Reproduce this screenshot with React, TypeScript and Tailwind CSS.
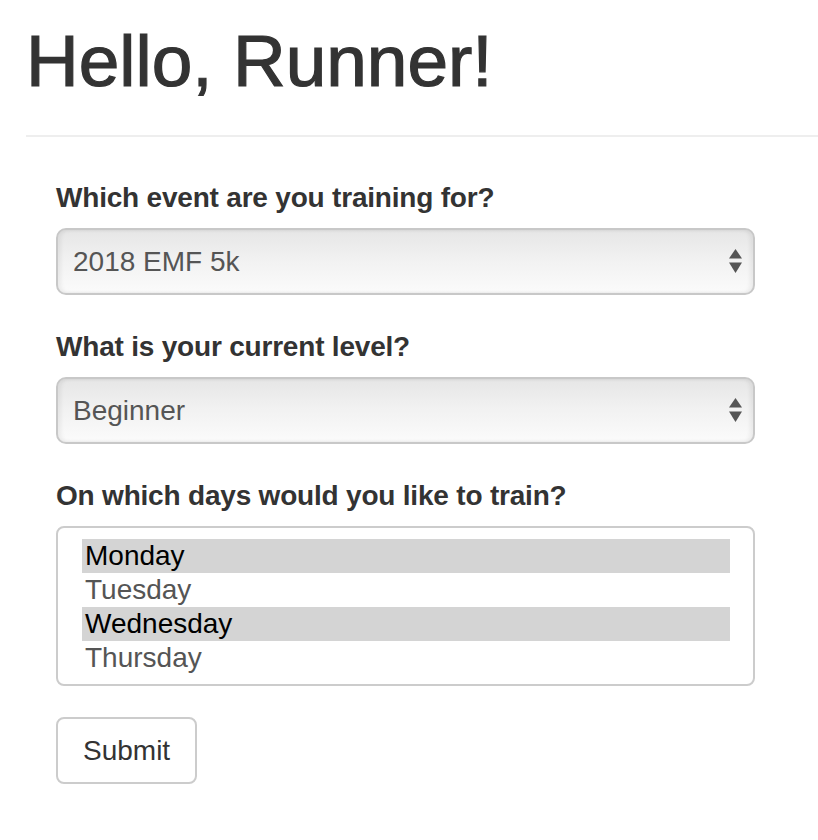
const events = ['2018 EMF 5k']
const levels = ['Beginner']
const days = [
  { name: 'Monday', selected: true },
  { name: 'Tuesday', selected: false },
  { name: 'Wednesday', selected: true },
  { name: 'Thursday', selected: false },
]

function SelectArrows() {
  return (
    <svg width="13" height="25" viewBox="0 0 13 25" className="shrink-0">
      <path d="M6.5 0L13 9.5H0Z" fill="#555" />
      <path d="M0 13.5H13L6.5 24Z" fill="#555" />
    </svg>
  )
}

function FakeSelect({ value }: { value: string }) {
  return (
    <div className="h-[67px] flex items-center justify-between pl-[15px] pr-[11px] rounded-[10px] border-2 border-[#c8c8c8] bg-gradient-to-b from-[#e6e6e6] via-[#f2f2f2] to-[#fbfbfb] shadow-[inset_3px_0_4px_rgba(0,0,0,0.06),inset_-3px_0_4px_rgba(0,0,0,0.06)] text-[28px] text-[#555]">
      <span>{value}</span>
      <SelectArrows />
    </div>
  )
}

function Label({ children }: { children: React.ReactNode }) {
  return (
    <label className="block text-[28px] leading-[40px] font-bold text-[#333] mb-[10px] tracking-[-0.2px]">
      {children}
    </label>
  )
}

export default function App() {
  return (
    <div className="min-h-[840px] bg-white pl-[26px] pt-[21px] font-['Liberation_Sans',Arial,sans-serif]">
      <h1 className="text-[73px] leading-[79px] text-[#333] [-webkit-text-stroke:1.2px_#333]">
        Hello, Runner!
      </h1>
      <div className="mt-[35px] h-[2px] bg-[#eeeeee]" />

      <form className="mt-[41px] ml-[30px] w-[699px]">
        <div className="mb-[32px]">
          <Label>Which event are you training for?</Label>
          <FakeSelect value={events[0]} />
        </div>

        <div className="mb-[32px]">
          <Label>What is your current level?</Label>
          <FakeSelect value={levels[0]} />
        </div>

        <div className="mb-[31px]">
          <Label>On which days would you like to train?</Label>
          <div className="h-[160px] rounded-[8px] border-2 border-[#cccccc] bg-white pt-[11px] pl-[24px] pr-[23px]">
            {days.map((d) => (
              <div
                key={d.name}
                className={
                  d.selected
                    ? 'h-[34px] leading-[34px] pl-[3px] text-[28px] bg-[#d4d4d4] text-black'
                    : 'h-[34px] leading-[34px] pl-[3px] text-[28px] text-[#555]'
                }
              >
                {d.name}
              </div>
            ))}
          </div>
        </div>

        <button
          type="button"
          className="h-[67px] px-[25px] rounded-[8px] border-2 border-[#cccccc] bg-white text-[28px] leading-[40px] text-[#333]"
        >
          Submit
        </button>
      </form>
    </div>
  )
}
